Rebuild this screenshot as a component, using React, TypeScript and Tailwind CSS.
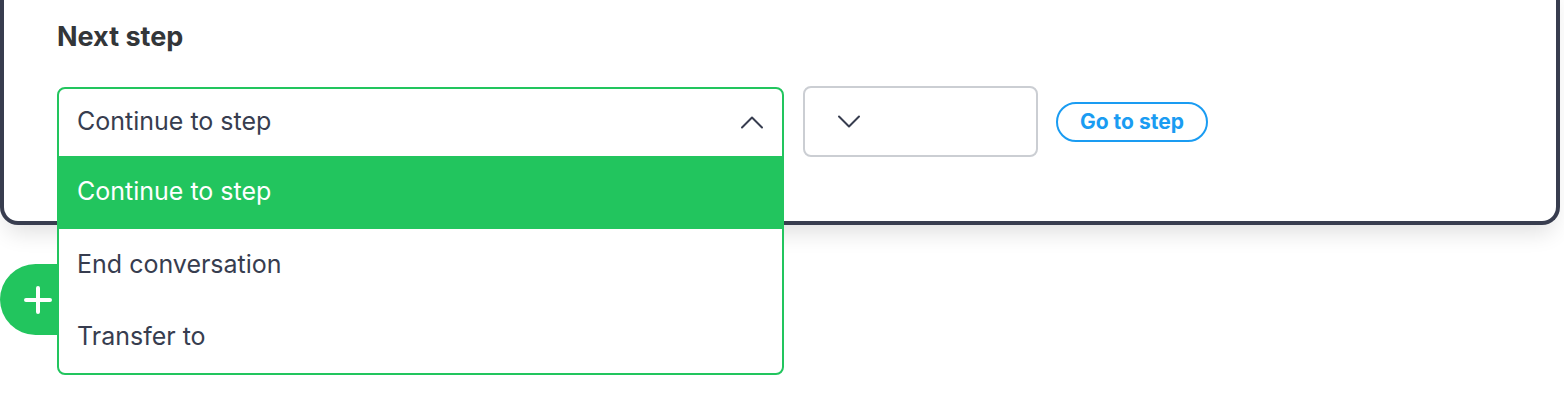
import React from 'react';

const OPTIONS = ['Continue to step', 'End conversation', 'Transfer to'];

function Chevron({ up }: { up?: boolean }) {
    return (
        <svg width="24" height="14" viewBox="0 0 24 14" fill="none" className="block">
            <path
                d={up ? 'M2 12.5L12 2.5L22 12.5' : 'M2 1.5L12 11.5L22 1.5'}
                stroke="#373d4f"
                strokeWidth="2"
                strokeLinecap="round"
                strokeLinejoin="round"
            />
        </svg>
    );
}

export default function App() {
    return (
        <div className="relative h-[410px] w-[1564px] overflow-hidden bg-white font-['Inter',sans-serif] text-[#373d4f]">
            <div className="-mt-[20px] mr-[4px] rounded-b-[18px] border-4 border-t-0 border-[#383d4f] bg-white pl-[53px] pt-[41px] pb-[64px] shadow-[0_14px_22px_-6px_rgba(0,0,0,0.12)]">
                <h2 className="text-[27px] leading-[32px] font-bold text-[#333639]">Next step</h2>

                <div className="mt-[33px] flex items-center">
                    <div className="relative h-[70px] w-[727px]">
                        <div className="absolute left-0 right-0 top-0 z-10 overflow-hidden rounded-lg border-2 border-[#22c55e] bg-white">
                            <div className="flex h-[67px] items-center justify-between pl-[18px] pr-[18px]">
                                <span className="text-[25px]">Continue to step</span>
                                <Chevron up />
                            </div>
                            {OPTIONS.map((o, i) => (
                                <div
                                    key={o}
                                    className={
                                        i === 0
                                            ? 'flex h-[73px] items-center bg-[#22c55e] pl-[18px] text-[25px] text-white'
                                            : 'flex h-[72px] items-center pl-[18px] text-[25px]'
                                    }
                                >
                                    {o}
                                </div>
                            ))}
                        </div>
                    </div>

                    <div className="ml-[19px] flex h-[71px] w-[235px] items-center rounded-lg border-2 border-[#cbced3] pl-[32px]">
                        <Chevron />
                    </div>

                    <button className="ml-[18px] flex h-[40px] items-center rounded-full border-2 border-[#1a9cf2] px-[22px] text-[21px] font-bold text-[#1a9cf2]">
                        Go to step
                    </button>
                </div>
            </div>

            <div className="mt-[39px] flex h-[71px] w-[140px] items-center rounded-full bg-[#22c55e] pl-[24px]">
                <svg width="28" height="28" viewBox="0 0 28 28" fill="none">
                    <path d="M14 2V26M2 14H26" stroke="white" strokeWidth="4" strokeLinecap="round" />
                </svg>
            </div>
        </div>
    );
}
